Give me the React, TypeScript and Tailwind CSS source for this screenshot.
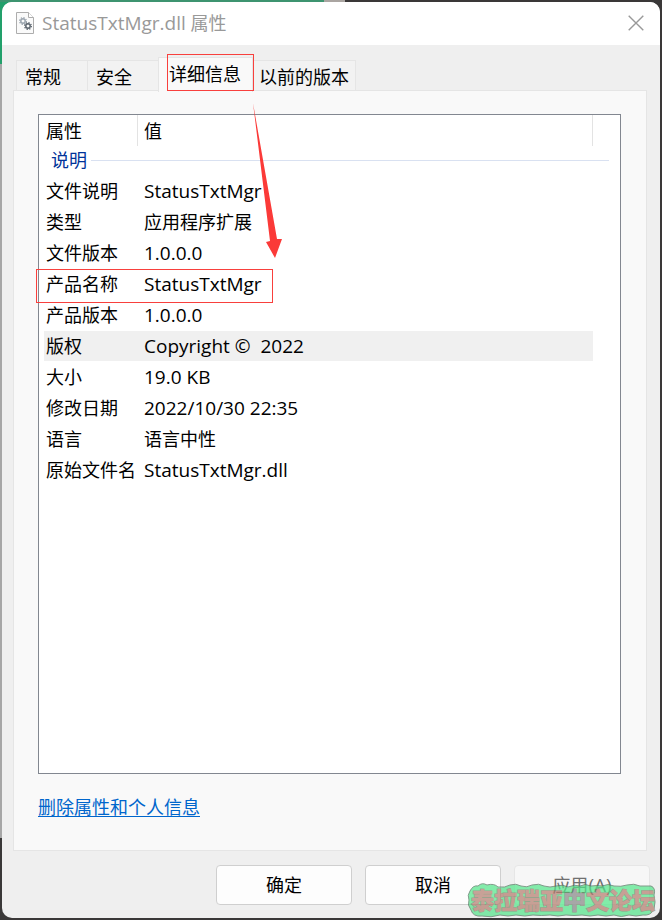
import React from 'react';

const rows: { name: string; value: string; latin?: boolean }[] = [
  { name: '文件说明', value: 'StatusTxtMgr', latin: true },
  { name: '类型', value: '应用程序扩展' },
  { name: '文件版本', value: '1.0.0.0', latin: true },
  { name: '产品名称', value: 'StatusTxtMgr', latin: true },
  { name: '产品版本', value: '1.0.0.0', latin: true },
  { name: '版权', value: 'Copyright ©  2022', latin: true },
  { name: '大小', value: '19.0 KB', latin: true },
  { name: '修改日期', value: '2022/10/30 22:35', latin: true },
  { name: '语言', value: '语言中性' },
  { name: '原始文件名', value: 'StatusTxtMgr.dll', latin: true },
];

function Gear({ x, y, color }: { x: number; y: number; color: string }) {
  return (
    <g transform={`translate(${x} ${y})`} stroke={color} fill="none">
      <circle r="2.2" strokeWidth="1.5" />
      <circle r="3.4" strokeWidth="1.2" strokeDasharray="1.3 1.37" />
    </g>
  );
}

function FileIcon() {
  return (
    <svg width="18" height="22" viewBox="0 0 18 22" aria-hidden="true">
      <path d="M.5.5h12l5 5v16H.5z" fill="#fafafa" stroke="#adadad" />
      <path d="M12.5.5v5h5" fill="#fff" stroke="#adadad" />
      <Gear x={7} y={9} color="#9ba5af" />
      <Gear x={12} y={14} color="#5c656e" />
    </svg>
  );
}

function TitleBar() {
  return (
    <header className="flex h-[43px] shrink-0 items-center bg-white pb-0.5 pl-3.5 pr-4">
      <FileIcon />
      <h1 className="ml-2 flex-1 leading-6 text-[#999]">
        <span className="text-[19px]">StatusTxtMgr.dll</span> 属性
      </h1>
      <button aria-label="关闭" className="flex size-4 items-center justify-center">
        <svg width="16" height="16" viewBox="0 0 16 16" aria-hidden="true">
          <path d="M.7.7l14.6 14.6M15.3.7L.7 15.3" stroke="#999" strokeWidth="1.4" />
        </svg>
      </button>
    </header>
  );
}

const tabBase = 'border border-b-0 border-[#e5e5e5] text-left leading-6';

function Tabs() {
  return (
    <div role="tablist" className="flex h-[34px] items-end pl-[3px]">
      <button role="tab" className={`${tabBase} h-[31px] w-[72px] bg-[#f2f2f2] pl-2 pt-0.5`}>常规</button>
      <button role="tab" className={`${tabBase} h-[31px] w-[70px] border-x-0 bg-[#f2f2f2] pl-2 pt-0.5`}>安全</button>
      <button
        role="tab"
        aria-selected="true"
        className={`${tabBase} relative z-10 -mb-px h-[35px] w-[95px] bg-[#f9f9f9] pb-0.5 pl-2.5`}
      >
        详细信息
        <span className="absolute -top-1 left-2 h-[37px] w-[87px] border border-[#f8403d]" />
        <svg className="pointer-events-none absolute left-[93px] top-[45px]" width="32" height="156" viewBox="0 0 32 156" aria-hidden="true">
          <path d="M1 0L25 136L30 136L23 155L14 139L18 138Z" fill="#fb3a38" />
        </svg>
      </button>
      <button role="tab" className={`${tabBase} h-[31px] w-[103px] border-l-0 bg-[#f2f2f2] pl-1.5 pt-0.5`}>以前的版本</button>
    </div>
  );
}

function DetailsTable() {
  return (
    <table className="w-full table-fixed border-collapse text-left">
      <colgroup>
        <col className="w-[98px]" />
        <col />
        <col className="w-[27px]" />
      </colgroup>
      <thead>
        <tr className="h-[31px]">
          <th scope="col" className="p-0 pl-[7px] font-normal">
            <div className="flex h-[31px] items-center">属性</div>
          </th>
          <th scope="col" className="p-0 font-normal">
            <div className="flex h-[31px] items-center border-x border-[#e3e3e3] pl-1.5">值</div>
          </th>
          <td />
        </tr>
      </thead>
      <tbody>
        <tr>
          <th scope="rowgroup" colSpan={3} className="p-0 font-normal">
            <div className="flex h-[30px] items-center gap-1 pb-0.5 pl-3 pr-[11px] text-[#003399]">
              说明
              <span className="h-px flex-1 bg-[#d9e1f1]" />
            </div>
          </th>
        </tr>
        {rows.map(({ name, value, latin }) => (
          <tr key={name} className="h-[31px]">
            <th scope="row" className="p-0 pl-[5px] font-normal">
              <div className={`relative h-[31px] border-b border-white pl-0.5 leading-[30px] whitespace-nowrap ${name === '版权' ? 'bg-[#f0f0f0]' : ''}`}>
                {name}
                {name === '产品名称' && (
                  <span className="absolute -left-2 top-0 z-10 block h-[34px] w-[237px]">
                    <span className="block h-full border border-[#f8403d]" />
                  </span>
                )}
              </div>
            </th>
            <td className="p-0">
              <div className={`h-[31px] border-b border-white pl-[7px] leading-[30px] whitespace-pre ${latin ? 'text-[19px]' : ''} ${name === '版权' ? 'bg-[#f0f0f0]' : ''}`}>{value}</div>
            </td>
            <td />
          </tr>
        ))}
      </tbody>
    </table>
  );
}

function Watermark() {
  return (
    <div className="pointer-events-none absolute bottom-0 right-[3px] h-9 w-[190px] opacity-70">
      <svg className="absolute inset-0" width="190" height="36" viewBox="0 0 190 36" aria-hidden="true">
        <path
          d="M3 9Q6 3 11 4Q15 0 20 3Q27 1 31 5Q38 6 43 3Q49 1 54 4Q60 6 65 3Q72 1 77 4Q83 6 89 4Q96 2 101 5Q108 2 113 4Q118 1 124 4Q130 3 135 4Q141 1 147 4Q154 5 160 3Q167 1 173 4L184 4Q189 6 187 13Q189 20 187 27Q184 34 176 33Q169 35 162 33Q154 36 147 33Q139 35 131 33Q123 35 115 33Q107 34 99 33Q91 35 83 33Q74 34 66 33Q58 35 49 33Q41 35 33 33Q24 36 15 34Q6 35 4 28Q0 23 2 18Q0 13 3 9Z"
          fill="#50e588"
          stroke="#50735d"
        />
      </svg>
      <span className="absolute left-1 top-0.5 text-[23px] leading-8 font-black whitespace-nowrap text-[#b37b6c] [-webkit-text-stroke:1px_#6f7f60] [paint-order:stroke_fill]">
        泰拉瑞亚<span className="text-[#858585]">中</span>文论坛
      </span>
    </div>
  );
}

const buttonBase = 'h-10 w-[136px] rounded border pb-px';

export default function App() {
  return (
    <div className="relative min-h-screen bg-[#3a3838] p-0.5 font-['Open_Sans','Noto_Sans_CJK_SC',sans-serif] text-lg leading-6 text-black">
      <div className="absolute left-0 top-0 h-[838px] w-2 bg-[#a6a6a6]" />
      <div className="absolute left-0 top-0 h-16 w-3 bg-[#22a06b]" />
      <div className="absolute left-0 top-0 h-0.5 w-[345px] bg-[#aaa5a1]" />
      <div className="absolute left-0 top-0 h-0.5 w-[324px] bg-[#3d9470]" />
      <main className="relative flex min-h-[calc(100vh-4px)] flex-col overflow-hidden rounded-[10px] bg-[#efefef]">
        <TitleBar />
        <div className="flex flex-1 flex-col pl-[11px] pr-[13px] pt-3">
          <Tabs />
          <section role="tabpanel" className="-mt-px flex flex-1 flex-col border border-[#e5e5e5] bg-[#f9f9f9] pl-6 pr-[25px] pt-[23px]">
            <div className="min-h-[600px] flex-1 border border-[#828790] bg-white">
              <DetailsTable />
            </div>
            <div className="flex h-[76px] items-start pt-[21px]">
              <a href="#" className="text-[#0066cc] underline underline-offset-2">删除属性和个人信息</a>
            </div>
          </section>
        </div>
        <footer className="flex h-[67px] shrink-0 items-start justify-end gap-[13px] pr-2.5 pt-3.5">
          <button className={`${buttonBase} border-[#cfcfcf] bg-[#fdfdfd]`}>确定</button>
          <button className={`${buttonBase} border-[#cfcfcf] bg-[#fdfdfd]`}>取消</button>
          <button disabled className={`${buttonBase} border-[#e6e6e6] bg-[#f7f7f7] text-[#707070]`}>
            应用<span className="text-[19px]">(A)</span>
          </button>
        </footer>
        <Watermark />
      </main>
    </div>
  );
}
